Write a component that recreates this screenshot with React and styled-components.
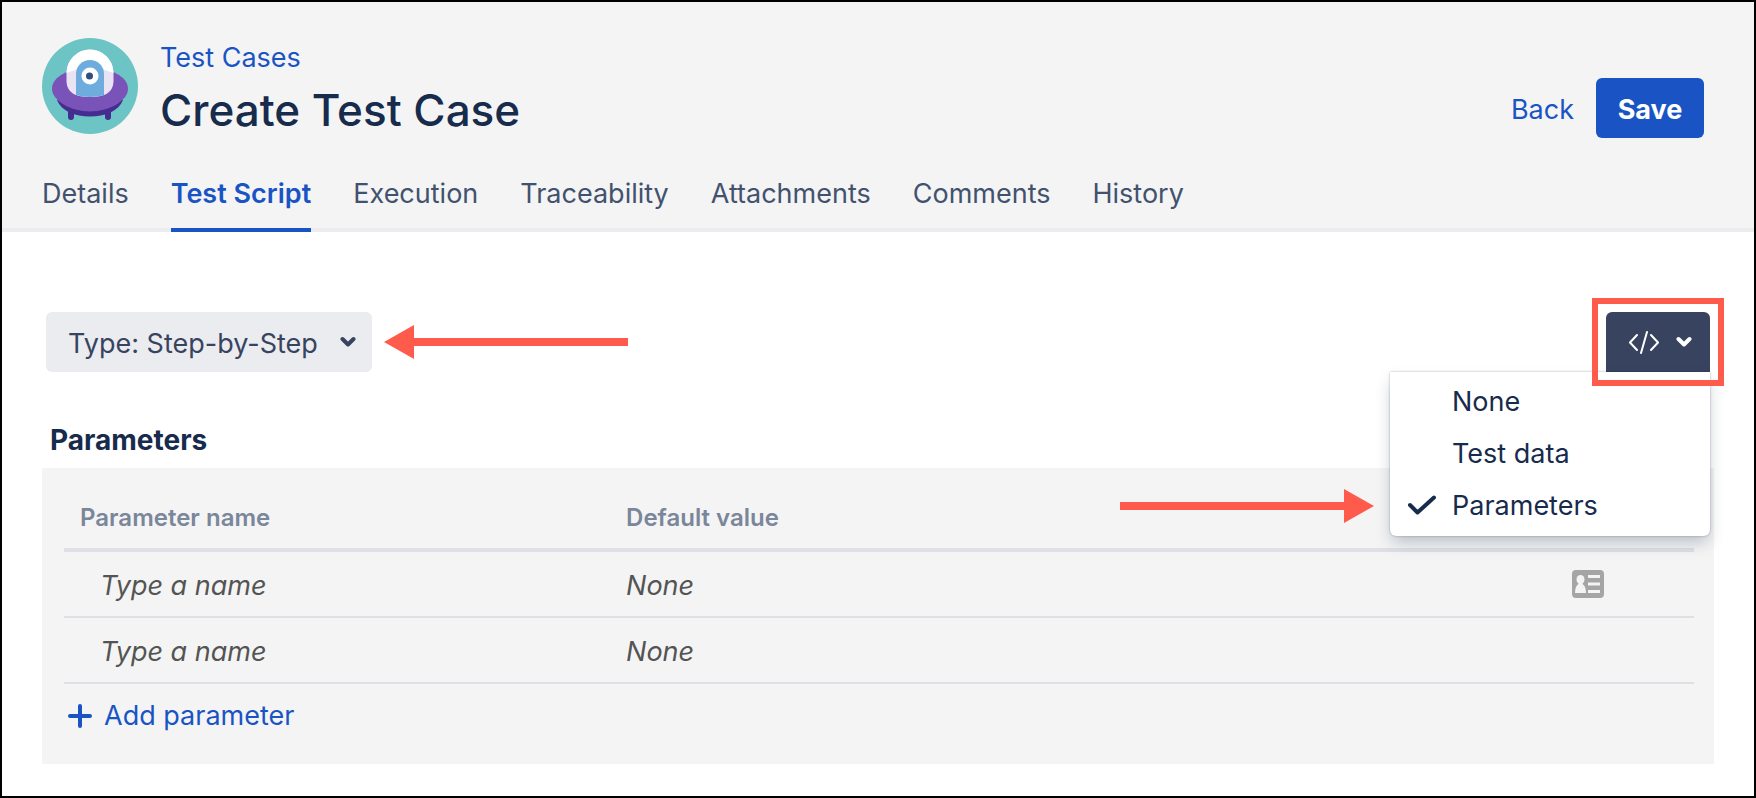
import React, { useState } from 'react';
import styled, { createGlobalStyle } from 'styled-components';

const color = {
  ink: '#172b4d',
  slate: '#42526e',
  navy: '#38445f',
  link: '#1a54c4',
  panel: '#f4f4f4',
  rule: '#dfe0e6',
  control: '#ebecf0',
  callout: '#ff5b4c',
};

const GlobalStyle = createGlobalStyle`
  *, *::before, *::after { box-sizing: border-box; }
  body {
    margin: 0;
    background: #fff;
    color: ${color.ink};
    font-family: Inter, "Liberation Sans", sans-serif;
    font-size: 27px;
    line-height: 32px;
  }
  button, input, select { font: inherit; color: inherit; }
`;

const Page = styled.div`
  min-height: 100vh;
  border: 2px solid #000;
`;

const Header = styled.header`
  display: flex;
  flex-direction: column;
  gap: 34px;
  padding: 36px 40px 0;
  background: ${color.panel};
  box-shadow: inset 0 -4px #ebebf0;
`;

const HeaderRow = styled.div`
  display: flex;
  align-items: flex-start;
`;

const Avatar = styled.svg`
  width: 96px;
  height: 96px;
  flex: none;
`;

const Titles = styled.div`
  flex: 1;
  padding: 4px 0 0 22px;
`;

const Link = styled.a`
  color: ${color.link};
  text-decoration: none;
`;

const Title = styled.h1`
  margin: 8px 0 0;
  font-size: 44px;
  line-height: 56px;
  font-weight: 500;
`;

const Actions = styled.div`
  display: flex;
  align-items: baseline;
  gap: 22px;
  padding: 40px 10px 0 0;
`;

const PrimaryButton = styled.button`
  min-width: 108px;
  height: 60px;
  padding: 4px 20px 0;
  border: 0;
  border-radius: 6px;
  background: ${color.link};
  color: #fff;
  font-weight: 700;
`;

const Tabs = styled.nav`
  display: flex;
  gap: 42px;
`;

const Tab = styled.a`
  padding: 6px 0 18px;
  border-bottom: 4px solid ${(p) => (p.$active ? color.link : 'transparent')};
  color: ${(p) => (p.$active ? color.link : color.slate)};
  font-weight: ${(p) => (p.$active ? 600 : 400)};
  text-decoration: none;
`;

const Main = styled.main`
  padding: 80px 40px 32px;
`;

const Toolbar = styled.div`
  display: flex;
  align-items: center;
  padding: 0 4px;
`;

const SelectBox = styled.label`
  position: relative;
  display: flex;
  align-items: center;
  color: ${color.navy};
`;

const Select = styled.select`
  appearance: none;
  height: 60px;
  padding: 4px 54px 0 22px;
  border: 0;
  border-radius: 6px;
  background: ${color.control};
`;

const SelectChevron = styled.span`
  position: absolute;
  right: 16px;
  display: flex;
  pointer-events: none;
`;

const ArrowLeft = styled.svg`
  width: 244px;
  height: 34px;
  margin-left: 12px;
`;

const ViewMenu = styled.div`
  position: relative;
  margin-left: auto;
`;

const ViewButton = styled.button`
  display: flex;
  align-items: center;
  gap: 16px;
  width: 104px;
  height: 60px;
  padding: 0 18px 0 22px;
  border: 0;
  border-radius: 6px 6px 0 0;
  background: ${color.navy};
  color: #fff;
`;

const Highlight = styled.div`
  position: absolute;
  z-index: 2;
  inset: -14px;
  border: 6px solid ${color.callout};
  pointer-events: none;
`;

const Menu = styled.div`
  position: absolute;
  z-index: 1;
  top: 100%;
  right: 0;
  width: 320px;
  padding: 4px 0;
  border-radius: 0 0 6px 6px;
  background: #fff;
  box-shadow: 0 0 2px rgba(9, 30, 66, 0.4), 0 8px 16px -2px rgba(9, 30, 66, 0.25);
`;

const MenuItem = styled.button`
  display: grid;
  grid-template-columns: 28px 1fr;
  gap: 16px;
  align-items: center;
  width: 100%;
  height: 52px;
  padding: 0 18px;
  border: 0;
  background: none;
  text-align: left;
`;

const ArrowRight = styled.svg`
  position: absolute;
  top: 177px;
  right: 336px;
  width: 254px;
  height: 34px;
`;

const SectionTitle = styled.h2`
  margin: 52px 8px 12px;
  font-size: 28px;
  line-height: 32px;
  font-weight: 700;
`;

const Panel = styled.section`
  padding: 20px 20px 32px 22px;
  background: ${color.panel};
`;

const Table = styled.table`
  width: 100%;
  border-collapse: separate;
  border-spacing: 0;
  table-layout: fixed;
`;

const HeadCell = styled.th`
  width: ${(p) => p.$width};
  height: 64px;
  padding: 0 16px;
  border-bottom: 4px solid ${color.rule};
  color: #7a869a;
  font-size: 24px;
  font-weight: 600;
  text-align: left;
`;

const Cell = styled.td`
  height: 66px;
  padding: 4px 16px 0 ${(p) => (p.$indent ? '36px' : '16px')};
  border-bottom: 2px solid ${color.rule};
`;

const ActionCell = styled(Cell)`
  padding-top: 0;
`;

const CellInput = styled.input`
  display: block;
  width: 100%;
  padding: 0;
  border: 0;
  background: none;
  font-style: italic;
  &::placeholder { color: #545454; opacity: 1; }
`;

const IconButton = styled.button`
  display: flex;
  margin-left: auto;
  margin-right: 74px;
  padding: 0;
  border: 0;
  background: none;
`;

const AddButton = styled.button`
  display: flex;
  align-items: center;
  gap: 12px;
  margin-top: 16px;
  padding: 0 4px;
  border: 0;
  background: none;
  color: ${color.link};
`;

const Chevron = () => (
  <svg width="16" height="12" viewBox="0 0 16 12" fill="none" stroke="currentColor" strokeWidth="4" strokeLinecap="round" strokeLinejoin="round" aria-hidden="true">
    <path d="M2.5 3 8 8.5 13.5 3" />
  </svg>
);

const Ufo = () => (
  <Avatar viewBox="0 0 96 96" role="img" aria-label="Project">
    <circle cx="48" cy="48" r="48" fill="#6cc4c4" />
    <path d="M29 70v9M66 70v9" stroke="#452c90" strokeWidth="6" strokeLinecap="round" />
    <path d="M15 62c4 11 18 16.500 33 16.500S77 73 81 62z" fill="#452c90" />
    <path d="M10 51C10 38 28 30 48 30s38 8 38 21C86 62 68 73.500 48 73.500S10 62 10 51z" fill="#7a53b8" />
    <path d="M24.500 35a23.500 23.500 0 0 1 47 0v8c0 8-5 13-11 14.500-8 2-17 2-25 0-6-1.500-11-6.500-11-14.500z" fill="#eae3f4" />
    <path d="M24.500 35a23.500 23.500 0 0 1 47 0C58 28.500 38 28.500 24.500 35z" fill="#fff" />
    <path d="M34 36a14 14 0 0 1 28 0v21c-8 2.500-20 2.500-28 0z" fill="#6dacdc" />
    <circle cx="48" cy="38" r="8.500" fill="#fff" />
    <circle cx="47.500" cy="38" r="3.500" fill="#304f7d" />
  </Avatar>
);

const CodeIcon = () => (
  <svg width="32" height="24" viewBox="0 0 32 24" fill="none" stroke="currentColor" strokeWidth="2" strokeLinecap="round" strokeLinejoin="round" aria-hidden="true">
    <path d="M9 5 2 12.500 9 20M23 5l7 7.500-7 7.500M19 2l-6 21" />
  </svg>
);

const CheckIcon = () => (
  <svg width="28" height="20" viewBox="0 0 28 20" fill="none" stroke="currentColor" strokeWidth="4" strokeLinecap="round" strokeLinejoin="round" aria-hidden="true">
    <path d="M2 10l7.500 7.500L26 2.500" />
  </svg>
);

const PlusIcon = () => (
  <svg width="24" height="24" viewBox="0 0 24 24" fill="none" stroke="currentColor" strokeWidth="4" strokeLinecap="round" aria-hidden="true">
    <path d="M12 2v20M2 12h20" />
  </svg>
);

const CardIcon = () => (
  <svg width="32" height="28" viewBox="0 0 32 28" aria-hidden="true">
    <rect width="32" height="28" rx="4" fill="#a5a5a5" />
    <ellipse cx="8.500" cy="9.500" rx="4" ry="4.500" fill="#f4f4f4" />
    <path d="M6.500 12h4v2c2 1 3.500 4 3.500 9H3c0-5 1.500-8 3.500-9z" fill="#f4f4f4" />
    <path d="M16 6.500h12M16 14h12M16 21.500h12" stroke="#f4f4f4" strokeWidth="3" />
  </svg>
);

const tabs = ['Details', 'Test Script', 'Execution', 'Traceability', 'Attachments', 'Comments', 'History'];
const views = ['None', 'Test data', 'Parameters'];

export default function App() {
  const [view, setView] = useState('Parameters');
  const [rows, setRows] = useState(2);

  return (
    <Page>
      <GlobalStyle />
      <Header>
        <HeaderRow>
          <Ufo />
          <Titles>
            <Link href="#cases">Test Cases</Link>
            <Title>Create Test Case</Title>
          </Titles>
          <Actions>
            <Link href="#back">Back</Link>
            <PrimaryButton type="button">Save</PrimaryButton>
          </Actions>
        </HeaderRow>
        <Tabs>
          {tabs.map((name) => (
            <Tab key={name} href="#tab" $active={name === 'Test Script'}>{name}</Tab>
          ))}
        </Tabs>
      </Header>
      <Main>
        <Toolbar>
          <SelectBox>
            <Select aria-label="Script type">
              <option>Type: Step-by-Step</option>
            </Select>
            <SelectChevron><Chevron /></SelectChevron>
          </SelectBox>
          <ArrowLeft viewBox="0 0 244 34" aria-hidden="true">
            <path d="M0 17 30 0v13h214v8H30v13z" fill={color.callout} />
          </ArrowLeft>
          <ViewMenu>
            <ViewButton type="button" aria-label="View" aria-haspopup="menu" aria-expanded="true">
              <CodeIcon />
              <Chevron />
            </ViewButton>
            <Highlight />
            <Menu role="menu">
              {views.map((name) => (
                <MenuItem key={name} type="button" role="menuitemradio" aria-checked={view === name} onClick={() => setView(name)}>
                  <span>{view === name && <CheckIcon />}</span>
                  <span>{name}</span>
                </MenuItem>
              ))}
            </Menu>
            <ArrowRight viewBox="0 0 254 34" aria-hidden="true">
              <path d="M254 17 224 0v13H0v8h224v13z" fill={color.callout} />
            </ArrowRight>
          </ViewMenu>
        </Toolbar>
        <SectionTitle>Parameters</SectionTitle>
        <Panel>
          <Table>
            <thead>
              <tr>
                <HeadCell scope="col" $width="33.5%">Parameter name</HeadCell>
                <HeadCell scope="col" $width="33.5%">Default value</HeadCell>
                <HeadCell scope="col" aria-label="Actions" />
              </tr>
            </thead>
            <tbody>
              {Array.from({ length: rows }, (_, i) => (
                <tr key={i}>
                  <Cell $indent><CellInput aria-label="Parameter name" placeholder="Type a name" /></Cell>
                  <Cell><CellInput aria-label="Default value" placeholder="None" /></Cell>
                  <ActionCell>
                    {i === 0 && <IconButton type="button" aria-label="Parameter details"><CardIcon /></IconButton>}
                  </ActionCell>
                </tr>
              ))}
            </tbody>
          </Table>
          <AddButton type="button" onClick={() => setRows(rows + 1)}>
            <PlusIcon />
            Add parameter
          </AddButton>
        </Panel>
      </Main>
    </Page>
  );
}
